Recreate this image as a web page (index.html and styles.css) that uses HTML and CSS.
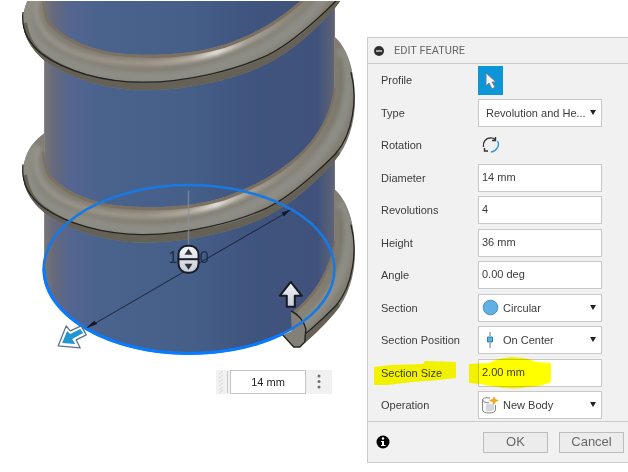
FILE: index.html
```html
<!DOCTYPE html>
<html lang="en">
<head>
<meta charset="utf-8">
<title>Edit Feature</title>
<link rel="stylesheet" href="styles.css">
</head>
<body>
<main class="workspace">
  <section class="scene" aria-label="Model view">
    <svg class="model" viewBox="0 0 366 472" aria-hidden="true">
      <defs>
        <linearGradient id="body" x1="44" x2="334" y1="0" y2="0" gradientUnits="userSpaceOnUse">
          <stop offset="0" stop-color="#777577"/>
          <stop offset=".035" stop-color="#65697d"/>
          <stop offset=".09" stop-color="#536590"/>
          <stop offset=".2" stop-color="#4a638c"/>
          <stop offset=".5" stop-color="#455f88"/>
          <stop offset=".72" stop-color="#3f547e"/>
          <stop offset=".94" stop-color="#40527b"/>
          <stop offset="1" stop-color="#606476"/>
        </linearGradient>
        <linearGradient id="shine" x1="44" x2="334" y1="0" y2="0" gradientUnits="userSpaceOnUse">
          <stop offset="0" stop-color="#97948c"/>
          <stop offset=".35" stop-color="#a0978b"/>
          <stop offset=".5" stop-color="#b9b1a6"/>
          <stop offset=".59" stop-color="#f4f2ec"/>
          <stop offset=".7" stop-color="#aca69b"/>
          <stop offset=".84" stop-color="#8f8a7f"/>
          <stop offset="1" stop-color="#7d776c"/>
        </linearGradient>
        <linearGradient id="metal" x1="0" x2="0" y1="0" y2="1">
          <stop offset="0" stop-color="#f4f6fa"/>
          <stop offset="1" stop-color="#c9ccd5"/>
        </linearGradient>
        <filter id="soft" x="-20%" y="-20%" width="140%" height="140%"><feGaussianBlur stdDeviation="2"/></filter>
        <path id="tube" d="M44 133 C30 143 23 157 23 173 C23 188 31 201 44 212 C64 227 104 242 143 242 C180 242 224 234 257 220 C288 207 315 182 334 160 C347 145 354 123 354 100 C354 72 347 48 333 36 V88 C330 115 315 139 297 155 C275 174 254 186 223 197 C190 207 150 209 110 204 C80 198 60 187 49 173 Q45 164 44 152Z"/>
        <clipPath id="tubeClip"><use href="#tube"/></clipPath>
        <clipPath id="viewTop"><path d="M0 1H366V472H0Z"/></clipPath>
        <clipPath id="tail"><path d="M290 308L297 313L305 328L304 342L301 350H366V180H333V246L303 290Z"/></clipPath>
        <g id="coil">
          <use href="#tube" fill="#827d73"/>
          <g clip-path="url(#tubeClip)" fill="none">
            <path d="M34 143 C22 163 24 187 48 204 C78 224 130 233 176 228 C231 219 276 197 308 167 C344 130 354 94 341 49" stroke="#8d8d85" stroke-width="11" filter="url(#soft)"/>
            <path d="M39 146 C30 168 40 188 66 201 C99 216 154 220 202 208 C248 196 284 176 308 152 C337 121 344 89 338 57" stroke="url(#shine)" stroke-width="6" filter="url(#soft)"/>
            <path d="M44 151Q45 166 49 174C60 188 80 199 110 205C150 210 190 208 223 198C254 187 275 175 297 156C315 140 330 116 333 88" stroke="#7b7061" stroke-width="4"/>
            <path d="M22 175C24 191 31 202 42 210C65 227 102 239 143 239C183 239 228 231 262 216C293 202 320 178 340 153" stroke="#656157" stroke-width="10"/>
          </g>
          <path d="M23 164C21 180 27 194 42 206C65 223 103 234 143 234C186 234 235 222 267 207C291 195 316 172 335 153C352 133 357 98 350 72" fill="none" stroke="#24231f" stroke-width="1.3"/>
        </g>
      </defs>
      <g clip-path="url(#viewTop)">
        <path d="M44 0V268A145 85 0 0 0 334 268V0Z" fill="url(#body)"/>
        <use href="#coil" y="-152"/>
        <use href="#coil"/>
        <g clip-path="url(#tail)"><use href="#coil" y="152"/></g>
      </g>
      <path d="M290 310Q302 316 305 328L304 341L299 346H293L282 334L291 330Z" fill="#828078"/>
      <path d="M290 310Q302 316 305 328L304 341L299 346H293L282 334" fill="none" stroke="#24231f" stroke-width="1.4"/>
      <ellipse cx="188.500" cy="268.500" rx="145" ry="84" fill="none" stroke="#1979e4" stroke-width="2.600"/>
      <path d="M44 268A145 84 0 0 0 282 333" fill="none" stroke="#087cff" stroke-width="3"/>
      <path d="M188 190V246" stroke="#8790a0" stroke-width="1.500" opacity=".7"/>
      <path d="M87 327L289 210" stroke="#1f2a40" stroke-width="1"/>
      <path d="M86 327L94 320L97 323ZM290 209L281 212L283 216Z" fill="#101827"/>
      <text class="dimension" x="188" y="262" text-anchor="middle">14.00</text>
      <rect x="178" y="245" width="20" height="27" rx="9" fill="url(#metal)" stroke="#171c27" stroke-width="2"/>
      <path d="M178 258.500H198" stroke="#171c27" stroke-width="2"/>
      <path d="M188 248L192 254H184ZM188 269L192 263H184Z" fill="#30343d"/>
      <path d="M290 281L301 295H294V306H286V295H279Z" fill="url(#metal)" stroke="#171a24" stroke-width="2" stroke-linejoin="round"/>
      <path d="M58 345L66 325L70 330L81 325L86 334L76 339L80 347Z" fill="#fff" stroke="#5c7187" stroke-width="1.300" stroke-linejoin="round"/>
      <path d="M62 342L67 330L70 333L80 328L83 332L72 338L75 343Z" fill="#2196d3"/>
    </svg>
    <div class="value-bar">
      <svg class="grip" viewBox="0 0 14 24" aria-hidden="true"><path d="M3 4l4-3M3 8l4-3M3 12l4-3M3 16l4-3M3 20l4-3M3 23l4-3" stroke="#d6d6d6"/><path d="M11.500 1V23" stroke="#c8c8c8"/></svg>
      <input class="value-input" aria-label="Diameter value" value="14 mm">
      <button class="more" aria-label="More options"><svg viewBox="0 0 26 24"><g fill="#6f6f6f"><circle cx="13" cy="6" r="1.500"/><circle cx="13" cy="11.500" r="1.500"/><circle cx="13" cy="17" r="1.500"/></g></svg></button>
    </div>
  </section>

  <form class="panel">
    <header class="panel-head">
      <svg class="collapse" viewBox="0 0 10 10" aria-hidden="true"><circle cx="5" cy="5" r="5" fill="#2f2f2f"/><path d="M2 5H8" stroke="#ddd" stroke-width="1.400"/></svg>
      <h1 class="title">EDIT FEATURE</h1>
    </header>
    <div class="fields">
      <div class="row">
        <label for="profile">Profile</label>
        <button type="button" class="pick" id="profile" aria-label="Select profile"><svg viewBox="0 0 25 29"><path d="M8 7V20L11 17L14 23L17 21L14 16H18Z" fill="#f5f5f5" stroke="#6f7f8a"/></svg></button>
      </div>
      <div class="row">
        <label for="type">Type</label>
        <div class="control"><select id="type"><option>Revolution and He...</option></select></div>
      </div>
      <div class="row">
        <label for="rotation">Rotation</label>
        <button type="button" class="rotate" id="rotation" aria-label="Flip rotation"><svg viewBox="0 0 18 18" fill="none" stroke-width="1.400"><path d="M1.500 11C.5 6 4 2 8 2Q11 1.500 13 3.500M13.500 1V4.500H10" stroke="#333"/><path d="M15.500 5C18 9 15 15 9 16" stroke="#2d96dc"/><path d="M6 15H2.500V12" stroke="#333"/></svg></button>
      </div>
      <div class="row"><label for="diameter">Diameter</label><div class="control"><input id="diameter" value="14 mm"></div></div>
      <div class="row"><label for="revolutions">Revolutions</label><div class="control"><input id="revolutions" value="4"></div></div>
      <div class="row"><label for="height">Height</label><div class="control"><input id="height" value="36 mm"></div></div>
      <div class="row"><label for="angle">Angle</label><div class="control"><input id="angle" value="0.00 deg"></div></div>
      <div class="row">
        <label for="section">Section</label>
        <div class="control with-icon">
          <select id="section"><option>Circular</option></select>
          <svg class="icon" viewBox="0 0 18 18" aria-hidden="true"><circle cx="8.500" cy="8.500" r="7.300" fill="#60b0e6" stroke="#468fc3"/></svg>
        </div>
      </div>
      <div class="row">
        <label for="position">Section Position</label>
        <div class="control with-icon">
          <select id="position"><option>On Center</option></select>
          <svg class="icon" viewBox="0 0 18 18" aria-hidden="true"><path d="M8 1V5M8 12V17" stroke="#777"/><path d="M5.500 6H10.500V11H5.500Z" fill="#55b3e8" stroke="#347ca9"/></svg>
        </div>
      </div>
      <div class="row">
        <label for="size" class="marked">Section Size
          <svg class="mark mark-label" viewBox="0 0 82 24" preserveAspectRatio="none" aria-hidden="true"><path d="M0 6L17 4L49 3L51 0L82 1V17L64 19L39 21L13 24H0Z"/></svg>
        </label>
        <div class="control"><input id="size" value="2.00 mm">
          <svg class="mark mark-field" viewBox="0 0 82 32" preserveAspectRatio="none" aria-hidden="true"><path d="M0 7L20 6Q28 1 43 0Q61 1 67 5L82 6V25Q72 30 58 30Q43 33 30 30Q19 29 11 27L0 26Z"/></svg>
        </div>
      </div>
      <div class="row">
        <label for="operation">Operation</label>
        <div class="control with-icon">
          <select id="operation"><option>New Body</option></select>
          <svg class="icon" viewBox="0 0 18 18" aria-hidden="true"><path d="M0 4V14Q1 17 7 17Q13 17 14 14V7L8 2Q1 1 0 4Z" fill="#f7f7f7"/><path d="M4 8Q9 9 12 7V14Q9 16 4 15Z" fill="#d5d9dc"/><path d="M8 2Q1 1 .5 4V14Q1 17 7 17Q13 17 13.500 14V9M.5 4Q2 7 7 7" fill="none" stroke="#888"/><path d="M12 0L13.500 3L17 4.500L13.500 6L12 9L10.500 6L7 4.500L10.500 3Z" fill="#f7a51c"/></svg>
        </div>
      </div>
    </div>
    <footer class="panel-foot">
      <svg class="info" viewBox="0 0 14 14" aria-hidden="true"><circle cx="7" cy="7" r="6.500" fill="#000"/><circle cx="7" cy="3.500" r="1.200" fill="#fff"/><path d="M5 6H8V10H9.500V11H5V10H6V7H5Z" fill="#fff"/></svg>
      <button type="button" class="action">OK</button>
      <button type="button" class="action">Cancel</button>
    </footer>
  </form>
</main>
</body>
</html>
```
FILE: styles.css
```css
* { box-sizing: border-box; }
body {
  margin: 0;
  background: #fff;
  color: #3c3c3c;
  font: 11px/14px "Liberation Sans", Arial, sans-serif;
}
button, input, select { font: inherit; color: inherit; border-radius: 0; margin: 0; }
svg { display: block; }
.workspace {
  display: grid;
  grid-template-columns: 1fr 261px;
  min-height: 100vh;
}
.scene { position: relative; overflow: hidden; }
.model { width: 100%; }
.dimension { font-size: 16px; fill: #1d2b47; }
.value-bar {
  position: absolute;
  left: 216px;
  top: 370px;
  display: flex;
  height: 24px;
  background: #f1f1f1;
}
.grip { width: 14px; }
.value-input {
  width: 76px;
  border: 1px solid #c6c6c6;
  background: #fff;
  padding: 0;
  text-align: center;
  color: #222;
}
.more { width: 26px; border: 0; padding: 0; background: none; }
.panel {
  display: flex;
  flex-direction: column;
  margin: 37px 0 10px;
  background: #f1f1f1;
  border: 1px solid #ccc;
  border-right: 0;
}
.panel-head {
  display: flex;
  align-items: center;
  gap: 10px;
  height: 26px;
  padding: 0 6px;
  border-bottom: 1px solid #ccc;
}
.collapse { width: 10px; }
.title { margin: 0; font: 11px/14px Roboto, sans-serif; color: #666; }
.fields {
  flex: 1;
  display: grid;
  grid-auto-rows: 1fr;
  padding-left: 13px;
}
.row {
  display: grid;
  grid-template-columns: 97px 124px;
  align-items: center;
}
.control { position: relative; }
.control input, .control select {
  display: block;
  width: 100%;
  height: 28px;
  border: 1px solid #c8c8c8;
  background-color: #fff;
}
.control input { padding: 0 3px 2px; }
.control select { appearance: none; padding: 0 7px; }
.control:has(select)::after {
  content: "";
  position: absolute;
  right: 6px;
  top: 11px;
  border: 3px solid transparent;
  border-top: 5px solid #222;
  border-bottom: 0;
}
.with-icon select { padding-left: 24px; }
.icon { position: absolute; left: 4px; top: 5px; width: 18px; height: 18px; }
.pick { width: 25px; height: 29px; padding: 0; border: 0; background: #0c96d8; }
.rotate { width: 25px; height: 18px; padding: 0 4px; border: 0; background: none; }
.rotate svg { width: 18px; height: 18px; }
.marked { position: relative; }
.mark { position: absolute; fill: #ffff00; mix-blend-mode: multiply; pointer-events: none; }
.mark-label { left: -7px; top: -5px; width: 82px; height: 24px; }
.mark-field { left: -9px; top: -2px; width: 82px; height: 32px; }
.panel-foot {
  display: flex;
  align-items: center;
  gap: 11px;
  height: 41px;
  padding: 0 4px 0 8px;
  border-top: 1px solid #ccc;
}
.info { width: 14px; margin-right: auto; }
.action {
  width: 65px;
  height: 21px;
  padding: 0;
  border: 1px solid #bdbdbd;
  background: #ececec;
  color: #686868;
  font-size: 13px;
}
```
